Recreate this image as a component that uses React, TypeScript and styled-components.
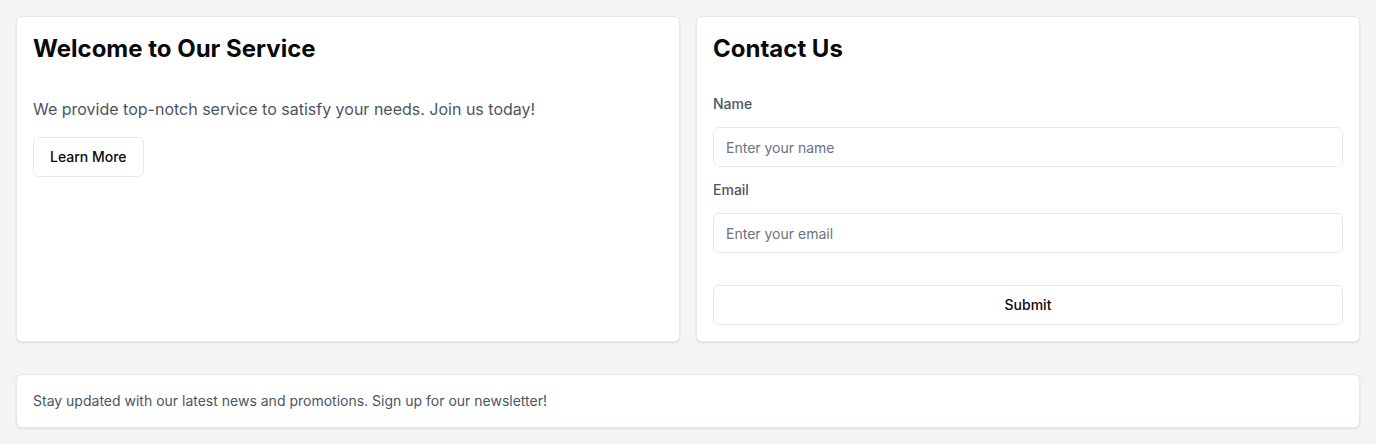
import React from "react";
import styled, { createGlobalStyle } from "styled-components";

const Global = createGlobalStyle`
  * { box-sizing: border-box; }
  body {
    margin: 0;
    background: #f3f4f6;
    font-family: Inter, "Noto Sans", Arial, sans-serif;
    color: #111827;
  }
`;

const Page = styled.div`
  padding: 16px;
  display: flex;
  flex-direction: column;
  gap: 32px;
`;

const Grid = styled.div`
  display: grid;
  grid-template-columns: 1fr 1fr;
  gap: 16px;
`;

const Card = styled.div`
  background: #fff;
  border: 1px solid #e5e7eb;
  border-radius: 6px;
  box-shadow: 0 1px 3px rgba(0, 0, 0, 0.06), 0 1px 2px rgba(0, 0, 0, 0.04);
  padding: 16px;
  display: flex;
  flex-direction: column;
`;

const Title = styled.h2`
  margin: 0 0 16px;
  font-size: 24px;
  line-height: 32px;
  font-weight: 700;
  color: #0a0a0a;
`;

const Text = styled.p<{ $small?: boolean }>`
  margin: ${(p) => (p.$small ? "0" : "16px 0")};
  font-size: ${(p) => (p.$small ? "14px" : "16px")};
  line-height: ${(p) => (p.$small ? "20px" : "24px")};
  color: #4b5563;
`;

const Button = styled.button<{ $full?: boolean }>`
  align-self: ${(p) => (p.$full ? "stretch" : "flex-start")};
  flex: ${(p) => (p.$full ? "1" : "none")};
  height: 40px;
  padding: 0 16px 1px;
  background: #fff;
  border: 1px solid #e5e7eb;
  border-radius: 6px;
  font-family: inherit;
  font-size: 14px;
  line-height: 20px;
  font-weight: 500;
  color: #0a0a0a;
  cursor: pointer;
`;

const Form = styled.form`
  display: flex;
  flex-direction: column;
`;

const Label = styled.label`
  display: block;
  margin: 13px 0 13px;
  font-size: 14px;
  line-height: 20px;
  font-weight: 500;
  color: #4b5563;
`;

const Input = styled.input`
  height: 40px;
  width: 100%;
  padding: 0 12px;
  border: 1px solid #e5e7eb;
  border-radius: 6px;
  font-family: inherit;
  font-size: 14px;
  color: #111827;
  background: #fff;
  outline: none;
  &::placeholder { color: #6b7280; }
`;

const SubmitRow = styled.div`
  margin-top: 32px;
  display: flex;
`;

export default function App() {
  return (
    <>
      <Global />
      <Page>
        <Grid>
          <Card>
            <Title>Welcome to Our Service</Title>
            <Text>We provide top-notch service to satisfy your needs. Join us today!</Text>
            <Button type="button">Learn More</Button>
          </Card>
          <Card>
            <Title>Contact Us</Title>
            <Form onSubmit={(e) => e.preventDefault()}>
              <Label htmlFor="name">Name</Label>
              <Input id="name" placeholder="Enter your name" />
              <Label htmlFor="email">Email</Label>
              <Input id="email" placeholder="Enter your email" />
              <SubmitRow>
                <Button $full type="submit">Submit</Button>
              </SubmitRow>
            </Form>
          </Card>
        </Grid>
        <Card>
          <Text $small>Stay updated with our latest news and promotions. Sign up for our newsletter!</Text>
        </Card>
      </Page>
    </>
  );
}
